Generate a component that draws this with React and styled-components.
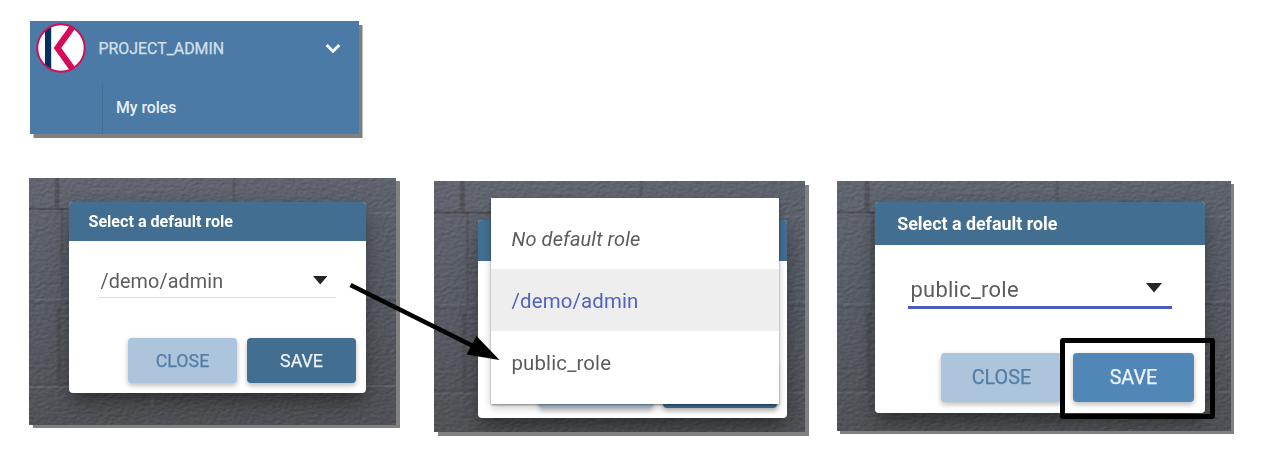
import React from "react";
import styled, { createGlobalStyle, css } from "styled-components";

const GlobalStyle = createGlobalStyle`
  * { box-sizing: border-box; }
  body {
    margin: 0;
    background: #fff;
    font-family: Roboto, "Liberation Sans", sans-serif;
  }
`;

const Page = styled.main`
  position: relative;
  width: 1268px;
  height: 463px;
  padding: 21px 0 0 29px;
  overflow: hidden;
`;

const UserMenu = styled.nav`
  width: 329px;
  height: 113px;
  margin-left: 1px;
  background: #4a7aa5;
  box-shadow: 3.5px 4px 0 #808080;
`;

const UserRow = styled.div`
  display: flex;
  align-items: center;
  height: 55px;
  padding: 0 18px 0 6px;
`;

const Logo = styled.svg`
  width: 50px;
  height: 50px;
  margin-top: -1px;
`;

const UserName = styled.span`
  flex: 1;
  margin-left: 12.5px;
  font-size: 15.9px;
  font-weight: 400;
  color: #d5e0ea;
  -webkit-text-stroke: 0.25px #d5e0ea;
`;

const Chevron = styled.svg`
  width: 16px;
  height: 12px;
`;

const SubMenu = styled.div`
  display: flex;
  align-items: center;
  height: 51px;
  margin: 7px 0 0 72px;
  padding: 0 0 3px 13px;
  border-left: 1px solid #416f98;
  color: #e9eff5;
  font-size: 15.8px;
  font-weight: 500;
`;

const Steps = styled.section`
  display: flex;
  align-items: flex-start;
  margin-top: 44px;
`;

const Panel = styled.div`
  flex: none;
  display: grid;
  grid-template: 100% / 100%;
  width: ${(p) => p.$width}px;
  height: ${(p) => p.$height}px;
  margin: ${(p) => p.$top || 0}px ${(p) => p.$after || 0}px 0 0;
  box-shadow: ${(p) => p.$shadow} 0 #808080;
  > * { grid-area: 1 / 1; }
`;

const Wall = styled.svg`
  display: block;
  width: 100%;
  height: 100%;
`;

const Grain = styled.rect`
  mix-blend-mode: soft-light;
  opacity: 0.3;
`;

const Stage = styled.div`
  position: relative;
  overflow: hidden;
  padding: ${(p) => p.$inset};
`;

const Dialog = styled.div`
  display: flex;
  flex-direction: column;
  width: 29.75em;
  height: 19.1em;
  font-size: ${(p) => p.$unit}px;
  border-radius: 4px;
  overflow: hidden;
  background: #fff;
  box-shadow: 0 11px 15px -7px rgba(0, 0, 0, 0.3),
    0 14px 24px 2px rgba(0, 0, 0, 0.15), 0 4px 16px 3px rgba(0, 0, 0, 0.1);
`;

const DialogHeader = styled.header`
  flex: none;
  height: 3.95em;
  padding-left: 2em;
  background: #426e92;
  color: #fff;
  > span {
    display: block;
    font-size: 1.61em;
    line-height: 2.48em;
    font-weight: 700;
    white-space: nowrap;
  }
`;

const SelectField = styled.div`
  display: flex;
  flex: none;
  align-items: center;
  justify-content: space-between;
  width: 23.8em;
  height: 4em;
  margin: 1.7em 0 0 2.95em;
  padding: 0.55em 0.9em 0 0.25em;
  border-bottom: ${(p) => (p.$focused ? "3px solid #4a5bbb" : "1px solid #dedede")};
  color: #5c5c5c;
  > span {
    padding-top: 0.12em;
    font-size: 1.98em;
    letter-spacing: ${(p) => (p.$focused ? 0.012 : 0.005)}em;
  }
`;

const Caret = styled.svg`
  width: 1.45em;
  height: 0.85em;
`;

const Actions = styled.footer`
  display: flex;
  gap: 1em;
  justify-content: flex-end;
  margin-top: auto;
  padding: 0 1em 1em 0;
`;

const Button = styled.button`
  width: 10.9em;
  height: 4.45em;
  padding: 0;
  border: 0;
  border-radius: 4px;
  font: inherit;
  box-shadow: 0 3px 5px rgba(0, 0, 0, 0.2), 0 1px 6px rgba(0, 0, 0, 0.08);
  > span {
    font-size: 1.78em;
    -webkit-text-stroke: 0.25px currentColor;
  }
  ${(p) =>
    p.$primary
      ? css`background: ${p.$hover ? "#5087b6" : "#426e92"}; color: #edf3f8;`
      : css`background: #adc4dd; color: #537da4;`}
`;

const Menu = styled.ul`
  position: absolute;
  left: 56.5px;
  top: 16.5px;
  width: 288.5px;
  height: 206px;
  margin: 0;
  padding: 10px 0 0;
  list-style: none;
  background: #fff;
  box-shadow: 0 1px 2px rgba(0, 0, 0, 0.4), 0 4px 8px rgba(0, 0, 0, 0.2);
`;

const Option = styled.li`
  display: flex;
  align-items: center;
  height: 61.7px;
  padding: 1.6px 0 0 21px;
  font-size: ${(p) => (p.$empty ? 20 : 20.4)}px;
  letter-spacing: ${(p) => (p.$empty ? 0.1 : 0.15)}px;
  color: ${(p) => (p.$selected ? "#5362bd" : "#5c5c5c")};
  background: ${(p) => (p.$selected ? "#eee" : "transparent")};
  font-style: ${(p) => (p.$empty ? "italic" : "normal")};
`;

const Highlight = styled.div`
  position: absolute;
  left: 223px;
  top: 157px;
  width: 155px;
  height: 81px;
  border: 5px solid #000;
  border-radius: 3px;
`;

const Arrow = styled.svg`
  position: absolute;
  left: 340px;
  top: 275px;
  width: 170px;
  height: 95px;
  pointer-events: none;
`;

function BrickWall({ id }) {
  return (
    <Wall viewBox="0 0 367 247" preserveAspectRatio="none" aria-hidden="true">
      <defs>
        <linearGradient id={`${id}-tone`} x1="0" y1="0" x2="0.15" y2="1">
          <stop offset="0" stopColor="#606570" />
          <stop offset="0.5" stopColor="#575b64" />
          <stop offset="1" stopColor="#505156" />
        </linearGradient>
        <filter id={`${id}-grain`} x="0" y="0" width="100%" height="100%" colorInterpolationFilters="sRGB">
          <feTurbulence type="fractalNoise" baseFrequency="0.22 0.34" numOctaves="3" seed="8" result="n" />
          <feDiffuseLighting in="n" surfaceScale="0.9" diffuseConstant="1" lightingColor="#fff">
            <feDistantLight azimuth="235" elevation="31" />
          </feDiffuseLighting>
        </filter>
        <filter id={`${id}-soft`} x="-10%" y="-10%" width="120%" height="120%">
          <feGaussianBlur stdDeviation="0.7" />
        </filter>
      </defs>
      <rect width="367" height="247" fill={`url(#${id}-tone)`} />
      <g filter={`url(#${id}-soft)`} fill="none">
        <path d="M28 0V31M30 129V208" stroke="#4d4c50" strokeWidth="4.5" opacity=".7" />
        <path d="M33 31V122M205 0V31" stroke="#4e4f54" strokeWidth="3" opacity=".5" />
        <path d="M0 31H60" stroke="#464446" strokeWidth="1.6" opacity=".85" />
        <path d="M0 125H50M330 122H367M0 206.5H367" stroke="#484a50" strokeWidth="1.6" opacity=".5" />
        <path d="M0 120Q20 124 40 120M325 35H367M0 209H45M325 208H367M330 119H367" stroke="#6d7684" strokeWidth="1.4" opacity=".55" />
        <path d="M123 212V228" stroke="#626a77" strokeWidth="4" opacity=".35" />
      </g>
      <Grain width="367" height="247" filter={`url(#${id}-grain)`} />
    </Wall>
  );
}

function RoleDialog({ unit, title, role, focused, hover }) {
  return (
    <Dialog $unit={unit}>
      <DialogHeader>{title && <span>{title}</span>}</DialogHeader>
      {role && (
        <SelectField $focused={focused}>
          <span>{role}</span>
          <Caret viewBox="0 0 14 8" preserveAspectRatio="none">
            <path d="M0 0H14L7 8Z" fill="#252525" />
          </Caret>
        </SelectField>
      )}
      <Actions>
        <Button>{role && <span>CLOSE</span>}</Button>
        <Button $primary $hover={hover}>{role && <span>SAVE</span>}</Button>
      </Actions>
    </Dialog>
  );
}

export default function App() {
  return (
    <Page>
      <GlobalStyle />
      <UserMenu>
        <UserRow>
          <Logo viewBox="0 0 50 50">
            <defs>
              <clipPath id="logo-disc"><circle cx="25" cy="25" r="23.5" /></clipPath>
            </defs>
            <circle cx="25" cy="25" r="24" fill="#fff" />
            <g clipPath="url(#logo-disc)">
              <rect x="9" y="0" width="6.2" height="50" fill="#06305d" />
              <path d="M38 2L21.5 25L38 48" fill="none" stroke="#d60b58" strokeWidth="6.2" />
            </g>
            <circle cx="25" cy="25" r="23.7" fill="none" stroke="#cb1059" strokeWidth="2" />
          </Logo>
          <UserName>PROJECT_ADMIN</UserName>
          <Chevron viewBox="0 0 16 12">
            <path d="M1.7 2L8 8.2L14.3 2" fill="none" stroke="#fff" strokeWidth="3" />
          </Chevron>
        </UserRow>
        <SubMenu>My roles</SubMenu>
      </UserMenu>

      <Steps>
        <Panel $width={367} $height={247} $after={38} $shadow="4px 3px">
          <BrickWall id="wall-a" />
          <Stage $inset="23.5px 0 0 39.5px">
            <RoleDialog unit={10} title="Select a default role" role="/demo/admin" />
          </Stage>
        </Panel>
        <Panel $width={371} $height={251} $top={3} $after={32} $shadow="4px 4px">
          <BrickWall id="wall-b" />
          <Stage $inset="38.5px 0 0 43.5px">
            <RoleDialog unit={10.4} />
            <Menu>
              <Option $empty>No default role</Option>
              <Option $selected>/demo/admin</Option>
              <Option>public_role</Option>
            </Menu>
          </Stage>
        </Panel>
        <Panel $width={394} $height={250} $top={3} $shadow="3px 3px">
          <BrickWall id="wall-c" />
          <Stage $inset="20.5px 0 0 38px">
            <RoleDialog unit={11.09} title="Select a default role" role="public_role" focused hover />
            <Highlight />
          </Stage>
        </Panel>
      </Steps>

      <Arrow viewBox="340 275 170 95">
        <path d="M350.5 285L480 349.5" stroke="#000" strokeWidth="4.6" />
        <path d="M499.5 360L476.5 336L466.5 354.5Z" fill="#000" />
      </Arrow>
    </Page>
  );
}
